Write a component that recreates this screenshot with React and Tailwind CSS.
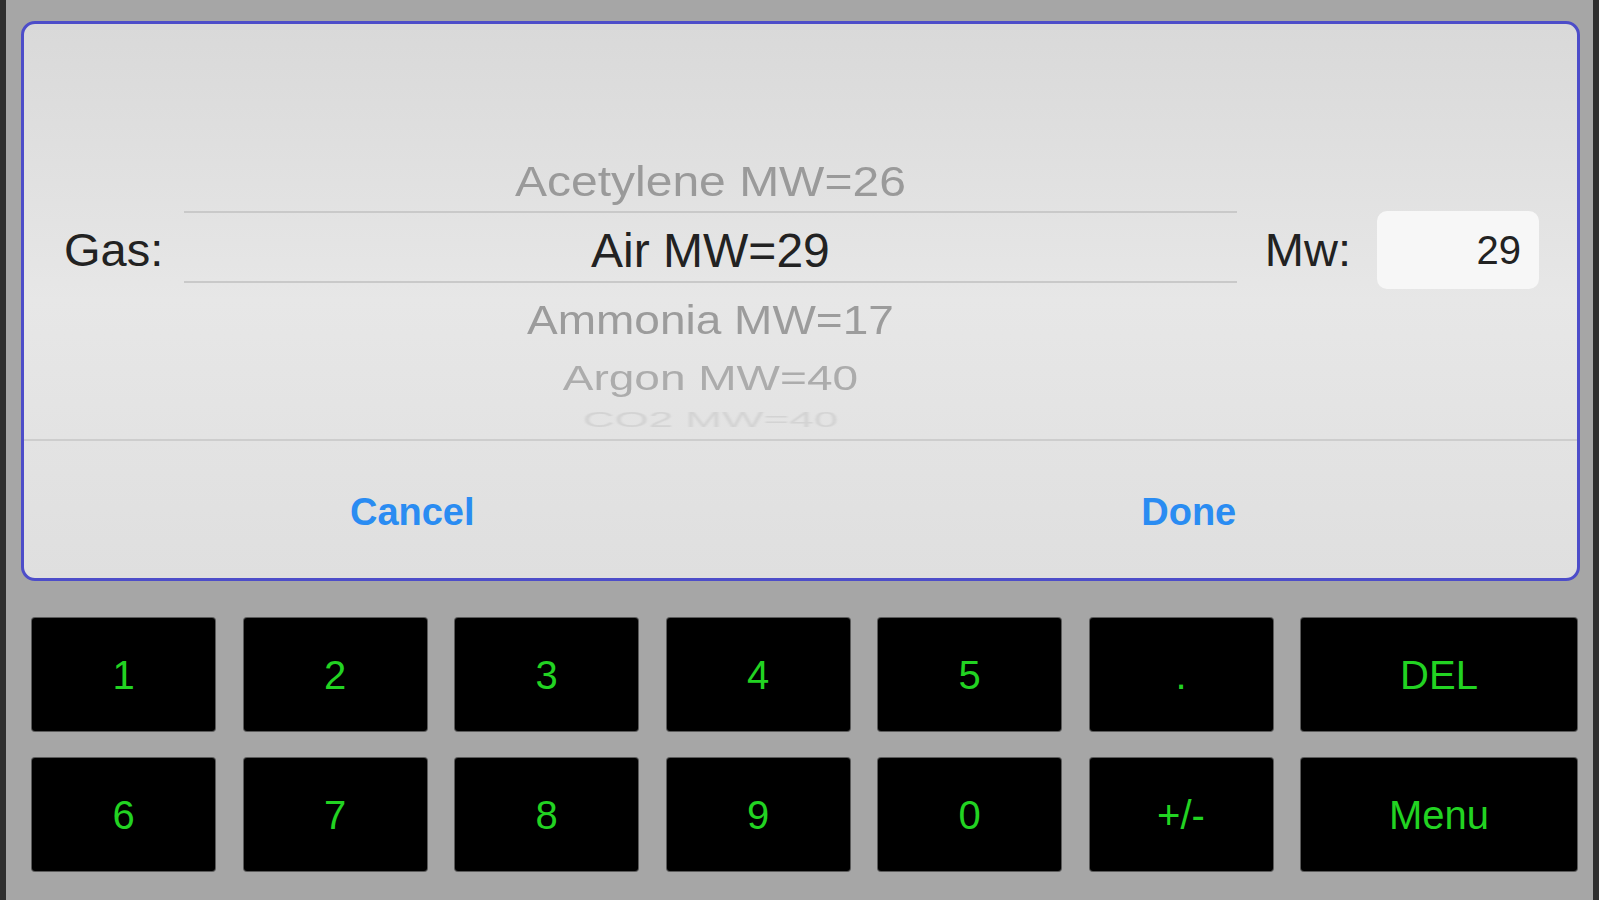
import React from "react";

const font = { fontFamily: '"Liberation Sans", Arial, sans-serif' };

const keys = [
  ["1", "2", "3", "4", "5", ".", "DEL"],
  ["6", "7", "8", "9", "0", "+/-", "Menu"],
];

function Key({ label }) {
  return (
    <button className="h-[113px] bg-black rounded-[3px] shadow-[0_0_0_1px_#5a5a5a] flex items-center justify-center text-[40px] leading-none text-[#22d322]">
      {label}
    </button>
  );
}

export default function App() {
  return (
    <div className="w-[1599px] h-[900px] flex overflow-hidden" style={font}>
      <div className="w-[6px] bg-[#2f2f2f]" />

      <div className="flex-1 bg-[#a6a6a6] flex flex-col pt-[21px]">
        {/* Picker dialog */}
        <div className="ml-[15px] mr-[13px] h-[560px] rounded-[14px] border-[3px] border-[#4d4dc9] bg-gradient-to-b from-[#d9d9d9] via-[#e7e7e7] to-[#dfdfdf] flex flex-col overflow-hidden">
          <div className="h-[415px] flex items-start pl-[40px] pr-[38px]">
            <div className="w-[120px] h-[75px] mt-[189px] flex items-center text-[47px] text-[#222]">
              Gas:
            </div>

            <div className="flex-1 h-full flex flex-col pt-[129px] overflow-hidden text-center text-[48px] leading-none">
              <div className="h-[60px] flex items-center justify-center text-[#9a9a9a] scale-y-[0.88]">
                Acetylene MW=26
              </div>
              <div className="h-[75px] flex items-center justify-center pt-[8px] border-y-2 border-[#c9c9c9] text-[#222]">
                Air MW=29
              </div>
              <div className="h-[60px] mt-[8px] flex items-center justify-center text-[#9c9c9c] text-[46px] scale-y-[0.88]">
                Ammonia MW=17
              </div>
              <div className="h-[60px] flex items-center justify-center text-[#acacac] text-[46px] scale-y-[0.75] blur-[0.6px]">
                Argon MW=40
              </div>
              <div className="h-[40px] -mt-[8px] flex items-center justify-center text-[#d3d3d3] text-[44px] scale-y-[0.5] blur-[1px]">
                CO2 MW=40
              </div>
            </div>

            <div className="ml-[28px] h-[75px] mt-[189px] flex items-center text-[47px] text-[#222]">
              Mw:
            </div>
            <div className="ml-[26px] mt-[187px] w-[162px] h-[78px] rounded-[10px] bg-[#f7f7f7] flex items-center justify-end pr-[18px] text-[40px] text-[#222]">
              29
            </div>
          </div>

          <div className="h-[2px] bg-[#cdcdcd]" />

          <div className="flex-1 grid grid-cols-2 pt-[6px]">
            <button className="flex items-center justify-center text-[38px] font-bold text-[#2a8cf2]">
              Cancel
            </button>
            <button className="flex items-center justify-center text-[38px] font-bold text-[#2a8cf2]">
              Done
            </button>
          </div>
        </div>

        {/* Keypad */}
        <div className="ml-[26px] mt-[37px] grid grid-cols-[183px_183px_183px_183px_183px_183px_276px] gap-x-[28.5px] gap-y-[27px]">
          {keys.flat().map((k) => (
            <Key key={k} label={k} />
          ))}
        </div>
      </div>

      <div className="w-[6px] bg-[#2f2f2f]" />
    </div>
  );
}
